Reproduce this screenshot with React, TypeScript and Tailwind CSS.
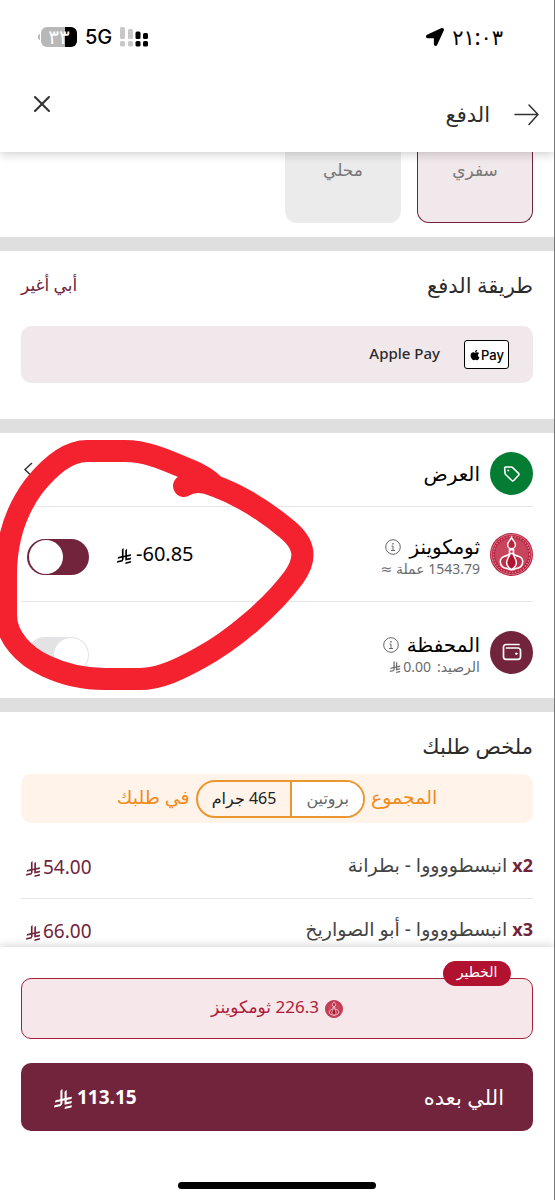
import { useState } from 'react';
import type { ReactNode } from 'react';
import { X } from 'lucide-react';
import { FaApple, FaLocationArrow } from 'react-icons/fa';

const Riyal = ({ className }: { className: string }) => (
  <svg viewBox="0 0 1124.14 1256.39" fill="currentColor" className={className} aria-label="ريال">
    <path d="M699.62,1113.02h0c-20.06,44.48-33.32,92.75-38.4,143.37l424.51-90.24c20.06-44.47,33.31-92.75,38.4-143.37l-424.51,90.24Z" />
    <path d="M1085.73,895.8c20.06-44.47,33.32-92.75,38.4-143.37l-330.68,70.33v-135.2l292.27-62.11c20.06-44.47,33.32-92.75,38.4-143.37l-330.68,70.27V66.13c-50.67,28.45-95.67,66.32-132.25,110.99v403.35l-132.25,28.11V0c-50.67,28.44-95.67,66.32-132.25,110.99v525.69l-295.91,62.88c-20.06,44.47-33.33,92.75-38.42,143.37l334.33-71.05v170.26l-358.3,76.14c-20.06,44.47-33.32,92.75-38.4,143.37l375.04-79.7c30.53-6.35,56.77-24.4,73.83-49.24l68.78-101.97v-.02c7.14-10.55,11.3-23.27,11.3-36.97v-149.98l132.25-28.11v270.4l424.53-90.28Z" />
  </svg>
);

const GarlicCoin = ({ className }: { className: string }) => (
  <svg viewBox="0 0 44 44" fill="none" className={className} aria-hidden="true">
    <circle cx="22" cy="22" r="22" fill="#b9213d" />
    <circle cx="22" cy="22" r="20.5" stroke="#d77c8c" strokeWidth="1" />
    <circle cx="22" cy="22" r="18.5" stroke="#d77c8c" strokeWidth="1.500" strokeDasharray="1.500 1.500" />
    <circle cx="22" cy="22" r="17" fill="#c8465d" />
    <path d="M22 4.500c-1 3-4 4.500-4 7.500a4 4 0 0 0 8 0c0-3-3-4.500-4-7.500z" fill="#b9213d" stroke="#fff" strokeWidth="1.500" />
    <path d="M20 17v4c-.5 1.800-2.500 2-5 2.800-2.700.9-4.500 3-4.500 5.700 0 4 3.500 7 6.500 6.500 2 1 3.500 1.500 5 1.500s3-.5 5-1.500c3 .5 6.500-2.500 6.500-6.500 0-2.700-1.800-4.800-4.500-5.700-2.500-.8-4.500-1-5-2.800v-4z" fill="#c22f4a" stroke="#fff" strokeWidth="1.600" />
    <path d="M20.500 21c-.6 3.500-3.500 5.500-3.500 9.500 0 3 2 5 5 7 3-2 5-4 5-7 0-4-2.900-6-3.500-9.500z" fill="#b0132f" stroke="#fff" strokeWidth="1.500" />
  </svg>
);

const TagIcon = () => (
  <svg width="18" height="18" viewBox="0 0 18 18" fill="none" stroke="#fff" strokeWidth="1.600" strokeLinejoin="round" aria-hidden="true">
    <path d="M2.600 2H8.300a1.500 1.500 0 0 1 1.100.4l6.200 6a1.300 1.300 0 0 1 0 1.900l-4.900 5.200a1.300 1.300 0 0 1-1.900 0L2.600 9.500a1.500 1.500 0 0 1-.5-1L1.700 3.200A1 1 0 0 1 2.600 2z" />
    <circle cx="5.300" cy="5.500" r=".7" fill="#fff" strokeWidth="0.500" />
  </svg>
);

const WalletIcon = () => (
  <svg width="20" height="20" viewBox="0 0 20 20" fill="none" stroke="#fff" strokeWidth="1.700" strokeLinecap="round" strokeLinejoin="round" aria-hidden="true">
    <path d="M17 2.500H4a2.500 2.500 0 0 0-2.500 2.500v9.800A2.500 2.500 0 0 0 4 17.300h12a2.500 2.500 0 0 0 2.500-2.500V8.500A2.500 2.500 0 0 0 16 6H4.500" />
    <circle cx="14.300" cy="11.700" r=".8" fill="#fff" strokeWidth="1" />
  </svg>
);

const InfoIcon = () => (
  <svg width="16" height="16" viewBox="0 0 16 16" fill="none" stroke="#666" strokeWidth="1" aria-hidden="true">
    <circle cx="8" cy="8" r="7.300" />
    <path d="M6.500 7H8v4.500M6 11.500h4" />
    <path d="M7.300 4.700h1.400" strokeWidth="1.400" />
  </svg>
);

const Toggle = ({ label, checked, onChange }: { label: string; checked: boolean; onChange?: () => void }) => (
  <label className="relative mt-1.5 block h-9 w-[62px] shrink-0">
    <input type="checkbox" aria-label={label} checked={checked} disabled={!onChange} onChange={onChange} className="peer sr-only" />
    <span className="block h-9 w-[62px] rounded-full bg-[#e3e3e6] peer-checked:bg-[#71243c]" />
    <span className="absolute top-px right-px h-[34px] w-[34px] rounded-full bg-white peer-checked:right-auto peer-checked:left-0.5" />
  </label>
);

const Row = ({ icon, title, info, note, children }: { icon: ReactNode; title: string; info?: boolean; note?: ReactNode; children?: ReactNode }) => (
  <div className="flex items-center gap-2.5">
    {icon}
    <div className="flex-1">
      <div className={`flex items-center gap-2 text-[20px] leading-6 font-medium text-black ${note ? 'pt-1.5' : ''}`}>
        {title}
        {info && <button type="button" aria-label={`عن ${title}`}><InfoIcon /></button>}
      </div>
      {note && <div className="flex items-center text-[14px] leading-5 text-[#6b6b6b]">{note}</div>}
    </div>
    {children}
  </div>
);

const ITEMS = [
  { count: 'x2', name: 'انبسطووووا - بطرانة', price: '54.00' },
  { count: 'x3', name: 'انبسطووووا - أبو الصواريخ', price: '66.00' },
];

const App = () => {
  const [useCoins, setUseCoins] = useState(true);

  return (
    <div dir="rtl" className="flex min-h-screen flex-col overflow-hidden border-r border-[#777] bg-white font-['Noto_Sans','DejaVu_Sans',sans-serif] text-[#2b2b2b]">
      <header className="relative z-10 bg-white shadow-[0_2px_10px_rgba(0,0,0,0.2)]">
        {/* Status bar */}
        <div className="flex h-[74px] items-center justify-between pr-[51px] pl-[38px] text-black">
          <div className="flex items-center gap-2 text-[21px] leading-8 font-medium">
            <span>٢١:٠٣</span>
            <FaLocationArrow size={18} />
          </div>
          <div dir="ltr" className="flex items-center gap-2">
            <div className="flex items-center gap-px">
              <span className="h-1.5 w-0.5 rounded-l-full bg-[#bbb]" />
              <span className="flex h-5 w-9 items-center justify-center rounded-md bg-[linear-gradient(90deg,#b8b8b8_66%,#000_66%)] text-[20px] leading-5 text-white">٣٣</span>
            </div>
            <span className="font-['Inter',sans-serif] text-[20px] leading-6 font-medium">5G</span>
            <svg width="29" height="20" viewBox="0 0 29 20" aria-hidden="true">
              <g fill="#c8c8c8">
                <rect x="0" y="0" width="5" height="12" rx="1.500" />
                <rect x="8" y="2" width="5" height="10" rx="1.500" />
                <rect x="0" y="14" width="5" height="5.500" rx="1.500" />
                <rect x="8" y="14" width="5" height="5.500" rx="1.500" />
              </g>
              <rect x="15.500" y="4.500" width="5" height="7.500" rx="1.500" />
              <rect x="23" y="6" width="5" height="6" rx="1.500" />
              <rect x="15.500" y="14" width="5" height="5.500" rx="1.500" />
              <rect x="23" y="14" width="5" height="5.500" rx="1.500" />
            </svg>
          </div>
        </div>
        <div className="flex h-[78px] items-start justify-between pr-3.5 pl-7">
          <div className="flex items-center gap-6 pt-6">
            <button type="button" aria-label="رجوع">
              <svg width="26" height="32" viewBox="0 0 26 32" fill="none" stroke="#333" strokeWidth="1.500" strokeLinecap="round" strokeLinejoin="round">
                <path d="M1 16.500h23M15 7l9 9.500-9 10" />
              </svg>
            </button>
            <h1 className="text-[21px] leading-8">الدفع</h1>
          </div>
          <button type="button" aria-label="إغلاق" className="pt-4">
            <X size={28} strokeWidth={1.75} color="#333" />
          </button>
        </div>
      </header>

      <div className="flex gap-4 px-[21px] pb-3.5">
        <button type="button" className="flex h-[71px] w-[116px] items-start justify-center rounded-b-xl border border-t-0 border-[#71243c] bg-[#f1e8eb] pt-1.5 text-[17px] leading-6 text-[#777]">سفري</button>
        <button type="button" className="flex h-[71px] w-[116px] items-start justify-center rounded-b-xl bg-[#ebebeb] pt-1.5 text-[17px] leading-6 text-[#777]">محلي</button>
      </div>

      <section className="border-t-14 border-[#dfdfdf] px-[21px] pt-[18px] pb-9">
        <div className="flex items-center justify-between">
          <h2 className="text-[21px] leading-8">طريقة الدفع</h2>
          <button type="button" className="text-[17px] leading-8 text-[#71243c]">أبي أغير</button>
        </div>
        <div className="mt-[25px] flex h-[57px] items-center gap-6 rounded-[10px] bg-[#f1e8eb] px-6">
          <span dir="ltr" className="flex h-[29px] w-[45px] items-center justify-center rounded-[3px] border border-black bg-white font-['Inter',sans-serif] text-[13px] leading-4 font-medium text-black">
            <FaApple size={12} />Pay
          </span>
          <span className="pb-1 text-[15px] leading-6 font-medium">Apple Pay</span>
        </div>
      </section>

      <section className="relative border-t-14 border-[#dfdfdf] px-[21px]">
        <div className="flex h-[74px] flex-col justify-center border-b border-[#e5e5e5] pt-2">
          <Row
            title="العرض"
            icon={<span className="flex h-[43px] w-[43px] items-center justify-center rounded-full bg-[#057c33]"><TagIcon /></span>}
          >
            <svg width="12" height="20" viewBox="0 0 12 20" fill="none" stroke="#333" strokeWidth="1.500" className="mb-2" aria-hidden="true">
              <path d="M11 3 4 9.500l7 7" />
            </svg>
          </Row>
        </div>
        <div className="flex h-[95px] flex-col justify-center border-b border-[#e5e5e5]">
          <Row title="ثومكوينز" info note="1543.79 عملة ≈" icon={<GarlicCoin className="h-[43px] w-[43px]" />}>
            <div className="flex items-center gap-[27px] pl-1.5">
              <span dir="ltr" className="flex items-center gap-1 text-[20px] leading-6 text-black">
                <Riyal className="mt-1 h-4 w-4" />-60.85
              </span>
              <Toggle label="ثومكوينز" checked={useCoins} onChange={() => setUseCoins(!useCoins)} />
            </div>
          </Row>
        </div>
        <div className="flex h-24 flex-col justify-center pt-1">
          <Row
            title="المحفظة"
            info
            note={<>الرصيد: <span dir="ltr" className="mr-1.5 flex items-center gap-0.5"><Riyal className="h-3 w-3" />0.00</span></>}
            icon={<span className="flex h-[43px] w-[43px] items-center justify-center rounded-full bg-[#71243c]"><WalletIcon /></span>}
          >
            <div className="pl-1.5"><Toggle label="المحفظة" checked={false} /></div>
          </Row>
        </div>
        {/* Hand-drawn marker loop */}
        <svg width="320" height="266" viewBox="0 433 320 266" fill="none" stroke="#f4222e" strokeWidth="22" strokeLinecap="round" strokeLinejoin="round" className="pointer-events-none absolute top-0 left-0" aria-hidden="true">
          <path d="M184 486C192 481 202 480 215 486C245 497 270 515 288 530C306 545 306 560 294 577C272 607 232 641 200 658C180 669 160 679 140 679H105C85 679 65 675 46 666C24 656 6 637 6 615V575C6 540 16 510 34 486C50 466 68 451 87 451H125C150 451 172 463 190 470C200 474 208 479 215 486" />
        </svg>
      </section>

      <section className="flex-1 border-t-14 border-[#dfdfdf] px-[21px] pt-[18px]">
        <h2 className="text-[21px] leading-8">ملخص طلبك</h2>
        <div className="mt-3 flex h-[49px] items-center justify-center gap-1.5 rounded-[10px] bg-[#fff3ea] text-[19px] leading-8 text-[#f08c1c]">
          <span className="pb-1">المجموع</span>
          <span className="flex h-[38px] items-stretch overflow-hidden rounded-full border-2 border-[#eb962f] text-[16px] leading-8">
            <span className="border-l-2 border-[#eb962f] bg-white px-3.5 text-[#666]">بروتين</span>
            <span className="px-3.5 text-[#222]">465 جرام</span>
          </span>
          <span className="pb-1">في طلبك</span>
        </div>
        <ul className="pt-3">
          {ITEMS.map((item) => (
            <li key={item.count} className="flex h-16 items-start justify-between border-b border-[#e5e5e5] pt-3.5 last:h-12 last:border-0">
              <span className="text-[19px] leading-8 text-[#444]">
                <b dir="ltr" className="text-[18px] text-[#71243c]">{item.count}</b> {item.name}
              </span>
              <span dir="ltr" className="flex items-center gap-0.5 pt-0.5 pl-1 text-[19px] leading-8 text-[#71243c]">
                <Riyal className="mt-1 h-4 w-4" />{item.price}
              </span>
            </li>
          ))}
        </ul>
      </section>

      <footer className="relative z-10 bg-white px-[21px] pt-[31px] shadow-[0_-2px_8px_rgba(0,0,0,0.15)]">
        <div className="relative flex h-[61px] items-center justify-center gap-1.5 rounded-[10px] border border-[#a51f3c] bg-[#f6e7ea] text-[17px] leading-6 text-[#ae1a38]">
          <span className="absolute -top-[18px] right-[21px] flex h-[25px] w-[68px] items-center justify-center rounded-full bg-[#b0122f] pb-1 text-[14px] leading-6 text-white">الخطير</span>
          <GarlicCoin className="h-[18px] w-[18px]" />
          <span className="pb-1">226.3 ثومكوينز</span>
        </div>
        <button type="button" className="mt-6 flex h-[68px] w-full items-center justify-between rounded-[10px] bg-[#71243c] pr-[29px] pl-8 text-[21px] leading-8 text-white">
          <span>اللي بعده</span>
          <span dir="ltr" className="flex items-center gap-1 text-[19px] font-bold">
            <Riyal className="mt-1 h-5 w-5" />113.15
          </span>
        </button>
        <div className="mx-auto mt-[51px] mb-3 h-[7px] w-[198px] rounded-full bg-black" />
      </footer>
    </div>
  );
};

export default App;
